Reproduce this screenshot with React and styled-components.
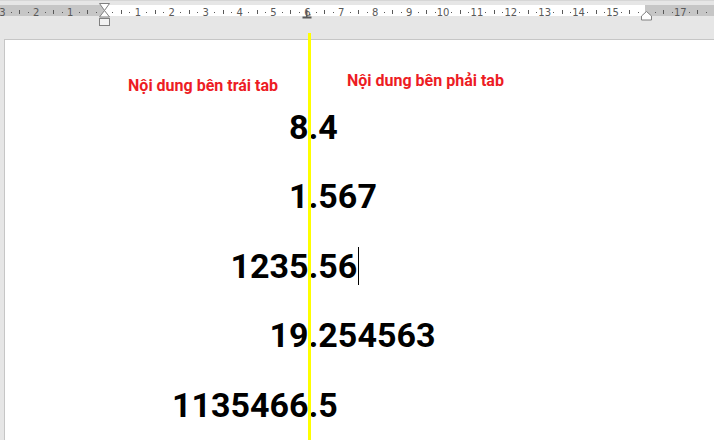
import React from 'react';
import styled, { createGlobalStyle } from 'styled-components';

const Global = createGlobalStyle`
  html, body { margin: 0; padding: 0; overflow: hidden; }
  body { font-family: Roboto, "Noto Sans", sans-serif; }
`;

const Window = styled.div`
  position: relative;
  width: 714px;
  height: 440px;
  overflow: hidden;
  background: #e6e6e6;
  display: flex;
  flex-direction: column;
`;

const RulerArea = styled.div`
  position: relative;
  height: 39px;
  border-top: 1px solid #d6d6d6;
  padding-top: 4px;
  box-sizing: border-box;
`;

const RulerBand = styled.div`
  display: flex;
  height: 11px;
`;

const Margin = styled.div`
  background: #c6c6c6;
  width: ${p => (p.$w ? p.$w + 'px' : 'auto')};
  flex: ${p => (p.$w ? 'none' : 1)};
`;

const TextArea = styled.div`
  background: #fff;
  width: 541px;
`;

const RulerMarks = styled.svg`
  position: absolute;
  left: 0;
  top: -1px;
  font-family: "DejaVu Sans", "Noto Sans", sans-serif;
`;

const Page = styled.div`
  flex: 1;
  margin-left: 4px;
  background: #fff;
  border-left: 1px solid #c6c6c6;
  border-top: 1px solid #c6c6c6;
  padding-top: 31.5px;
`;

const Header = styled.div`
  display: grid;
  grid-template-columns: 303px 1fr;
  height: 21.5px;
  font-size: 16px;
  line-height: 20px;
  font-weight: 700;
  color: #ed1c24;
  white-space: nowrap;
`;

const HeadLeft = styled.span`
  text-align: right;
  padding-right: 30px;
  padding-top: 5px;
`;

const HeadRight = styled.span`
  padding-left: 39px;
`;

const Row = styled.div`
  display: grid;
  grid-template-columns: 303.5px 1fr;
  height: 69.5px;
  line-height: 69.5px;
  font-size: 34px;
  font-weight: 700;
  color: #000;
  white-space: nowrap;
`;

const IntPart = styled.span`
  text-align: right;
`;

const FracPart = styled.span``;

const Caret = styled.span`
  display: inline-block;
  width: 1px;
  height: 38px;
  margin-left: 1px;
  background: #000;
  vertical-align: -7px;
`;

const TabGuide = styled.div`
  position: absolute;
  left: 308px;
  top: 33px;
  bottom: 0;
  width: 3px;
  background: #ffff00;
`;

const ORIGIN = 104;
const UNIT = 33.9;
const TICK = '#595959';

function Ruler() {
  const marks = [];
  for (let i = -4; i <= 18; i++) {
    const x = ORIGIN + i * UNIT;
    if (i !== 0 && i !== 16 && i >= -3 && i <= 17) {
      marks.push(
        <text key={'n' + i} x={x} y={16} fontSize="10" fill={TICK} textAnchor="middle">
          {Math.abs(i)}
        </text>
      );
    }
    [0.25, 0.5, 0.75].forEach(f => {
      const fx = Math.round(x + f * UNIT);
      if (fx < 0 || fx > 714) return;
      if (f === 0.5) {
        marks.push(<rect key={'l' + i + f} x={fx} y={10} width={1} height={4} fill={TICK} />);
      } else {
        marks.push(<rect key={'d' + i + f} x={fx} y={12} width={1} height={1} fill={TICK} />);
      }
    });
  }
  return (
    <RulerMarks width="714" height="30" viewBox="0 0 714 30">
      {marks}
      {/* decimal tab stop */}
      <rect x="306" y="10" width="1.5" height="7" fill={TICK} />
      <rect x="302.5" y="16.5" width="9" height="2" fill={TICK} />
      <rect x="309" y="14" width="1.5" height="1.5" fill={TICK} />
      {/* left indent hourglass */}
      <path d="M99.5 3.5 H109.5 L104.5 10.5 Z" fill="#fff" stroke="#808080" />
      <path d="M104.5 10.5 L109.5 17 H99.5 Z" fill="#fff" stroke="#808080" />
      <rect x="99.5" y="18.5" width="10" height="7" fill="#f2f2f2" stroke="#808080" />
      {/* right indent */}
      <path d="M646.5 11.5 L651.5 16 V20 H641.5 V16 Z" fill="#fff" stroke="#808080" />
    </RulerMarks>
  );
}

const rows = [
  ['8', '.4'],
  ['1', '.567'],
  ['1235', '.56', true],
  ['19', '.254563'],
  ['1135466', '.5'],
];

export default function App() {
  return (
    <>
      <Global />
      <Window>
        <RulerArea>
          <RulerBand>
            <Margin $w={104} />
            <TextArea />
            <Margin />
          </RulerBand>
          <Ruler />
        </RulerArea>
        <Page>
          <Header>
            <HeadLeft>Nội dung bên trái tab</HeadLeft>
            <HeadRight>Nội dung bên phải tab</HeadRight>
          </Header>
          {rows.map(([a, b, caret]) => (
            <Row key={a + b}>
              <IntPart>{a}</IntPart>
              <FracPart>
                {b}
                {caret && <Caret />}
              </FracPart>
            </Row>
          ))}
        </Page>
        <TabGuide />
      </Window>
    </>
  );
}
